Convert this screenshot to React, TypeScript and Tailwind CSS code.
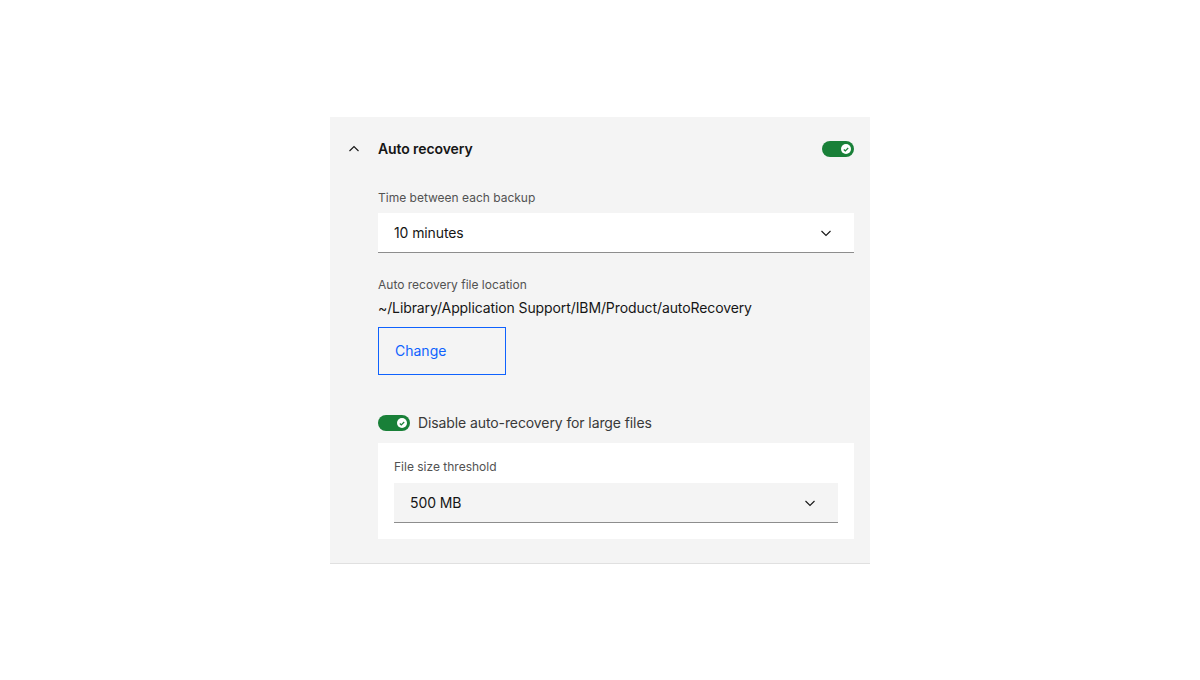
import React from 'react';

function Toggle() {
  return (
    <div className="relative w-8 h-4 rounded-full bg-[#198038] shrink-0">
      <div className="absolute right-[3px] top-[3px] w-[10px] h-[10px] rounded-full bg-white flex items-center justify-center">
        <svg width="6" height="5" viewBox="0 0 6 5" fill="none">
          <path d="M0.8 2.5 L2.3 4 L5.2 1" stroke="#198038" strokeWidth="1.2" />
        </svg>
      </div>
    </div>
  );
}

function ChevronDown() {
  return (
    <svg width="16" height="16" viewBox="0 0 16 16" fill="none">
      <path d="M3.5 6 L8 10.5 L12.5 6" stroke="#161616" strokeWidth="1.1" />
    </svg>
  );
}

function ChevronUp() {
  return (
    <svg width="16" height="16" viewBox="0 0 16 16" fill="none">
      <path d="M3.5 10 L8 5.5 L12.5 10" stroke="#161616" strokeWidth="1.1" />
    </svg>
  );
}

function Select({ value, bg }: { value: string; bg: string }) {
  return (
    <div className={`h-10 flex items-center justify-between pl-4 pr-5 border-b border-[#8d8d8d] ${bg}`}>
      <span className="text-sm text-[#161616] tracking-[-0.1px]">{value}</span>
      <ChevronDown />
    </div>
  );
}

export default function App() {
  return (
    <div className="min-h-screen bg-white flex justify-center items-start pt-[117px]" style={{ fontFamily: 'Inter, "Liberation Sans", sans-serif' }}>
      <div className="w-[540px] bg-[#f4f4f4] border-b border-[#e0e0e0] pb-6">
        {/* header */}
        <div className="h-16 flex items-center pl-4 pr-4">
          <div className="w-8 flex items-center">
            <ChevronUp />
          </div>
          <span className="text-sm font-semibold text-[#161616] flex-1 tracking-[-0.1px]">Auto recovery</span>
          <Toggle />
        </div>

        <div className="pl-12 pr-4 pt-2">
          <div className="text-xs leading-4 pt-px text-[#525252]">Time between each backup</div>
          <div className="mt-[7px]">
            <Select value="10 minutes" bg="bg-white" />
          </div>

          <div className="mt-6 text-xs leading-4 text-[#525252]">Auto recovery file location</div>
          <div className="mt-[5px] text-sm leading-5 text-[#161616] tracking-[-0.1px]">~/Library/Application Support/IBM/Product/autoRecovery</div>
          <button className="mt-[9px] w-32 h-12 border border-[#0f62fe] text-left pl-4 text-sm text-[#0f62fe]">Change</button>

          <div className="mt-9 h-6 flex items-center gap-2">
            <Toggle />
            <span className="text-sm text-[#393939] tracking-[-0.1px]">Disable auto-recovery for large files</span>
          </div>

          <div className="mt-2 bg-white p-4">
            <div className="text-xs leading-4 text-[#525252]">File size threshold</div>
            <div className="mt-2">
              <Select value="500 MB" bg="bg-[#f4f4f4]" />
            </div>
          </div>
        </div>
      </div>
    </div>
  );
}
